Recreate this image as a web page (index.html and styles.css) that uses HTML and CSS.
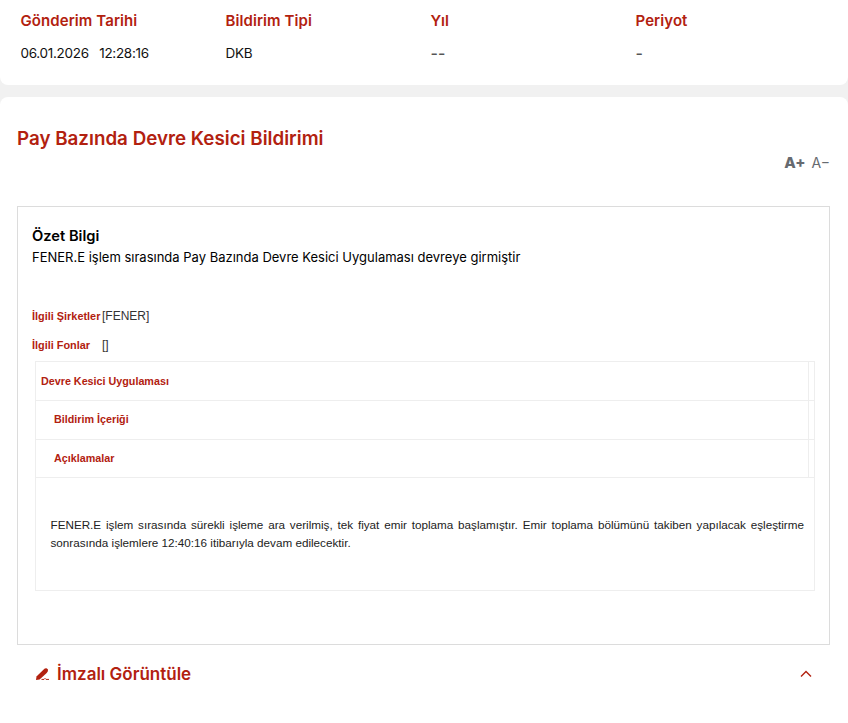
FILE: index.html
```html
<!DOCTYPE html>
<html lang="tr">
<head>
<meta charset="utf-8">
<title>Pay Bazında Devre Kesici Bildirimi</title>
<link rel="stylesheet" href="styles.css">
</head>
<body>
<section class="meta-card">
  <div class="meta-col"><div class="meta-label">Gönderim Tarihi</div><div class="meta-value">06.01.2026 &nbsp; 12:28:16</div></div>
  <div class="meta-col"><div class="meta-label">Bildirim Tipi</div><div class="meta-value">DKB</div></div>
  <div class="meta-col"><div class="meta-label">Yıl</div><div class="meta-value muted">--</div></div>
  <div class="meta-col"><div class="meta-label">Periyot</div><div class="meta-value muted">-</div></div>
</section>
<main class="main-card">
  <h1 class="title">Pay Bazında Devre Kesici Bildirimi</h1>
  <div class="font-tools"><span class="font-up">A+</span><span class="font-down">A−</span></div>
  <div class="box">
    <h2 class="summary-title">Özet Bilgi</h2>
    <p class="summary-text">FENER.E işlem sırasında Pay Bazında Devre Kesici Uygulaması devreye girmiştir</p>
    <div class="rel first"><span class="rel-label">İlgili Şirketler</span><span class="rel-value">[FENER]</span></div>
    <div class="rel"><span class="rel-label">İlgili Fonlar</span><span class="rel-value">[]</span></div>
    <table class="notice">
      <tr><td class="head">Devre Kesici Uygulaması</td><td class="side"></td></tr>
      <tr><td class="head sub">Bildirim İçeriği</td><td class="side"></td></tr>
      <tr><td class="head sub short">Açıklamalar</td><td class="side"></td></tr>
      <tr><td class="body" colspan="2"><p>FENER.E işlem sırasında sürekli işleme ara verilmiş, tek fiyat emir toplama başlamıştır. Emir toplama bölümünü takiben yapılacak eşleştirme sonrasında işlemlere 12:40:16 itibarıyla devam edilecektir.</p></td></tr>
    </table>
  </div>
  <div class="signed">
    <svg class="pen" viewBox="0 0 13 12" aria-hidden="true"><path d="M0 12 L.5 8.6 L7.4 1.7 Q9.2 0 10.9.4 L12 1.5 Q12.4 3.2 10.7 5 L3.6 11.4 Z"/><path class="pen-line" d="M5.5 11.4 H8 L9 10.4 L10 11.4 H13"/></svg>
    <span class="signed-label">İmzalı Görüntüle</span>
    <svg class="chev" viewBox="0 0 12 8" aria-hidden="true"><path d="M1 6.5 L6 1.5 L11 6.5"/></svg>
  </div>
</main>
</body>
</html>
```
FILE: styles.css
```css
* { box-sizing: border-box; }
html, body { margin: 0; padding: 0; }
body {
  width: 848px;
  height: 723px;
  overflow: hidden;
  background: #f1f1f1;
  font-family: Inter, "Noto Sans", sans-serif;
  color: #000;
}
.meta-card {
  height: 85px;
  background: #fff;
  border-radius: 0 0 8px 8px;
  padding: 11px 0 0 20.5px;
  display: grid;
  grid-template-columns: repeat(4, 205px);
  margin-bottom: 12px;
}
.meta-label {
  color: #b2210f;
  font-size: 15px;
  font-weight: 600;
  line-height: 20px;
  letter-spacing: .08px;
}
.meta-value {
  margin-top: 12px;
  font-size: 13.5px;
  line-height: 20px;
  letter-spacing: -.3px;
  color: #111;
}
.meta-value.muted { color: #555; font-size: 16px; font-weight: 500; letter-spacing: 0; }
.main-card {
  height: 626px;
  background: #fff;
  border-radius: 8px 8px 0 0;
  padding: 27px 18px 0 17px;
}
.title {
  margin: 0;
  color: #b2210f;
  font-size: 18.8px;
  font-weight: 600;
  line-height: 30px;
}
.font-tools {
  display: flex;
  justify-content: flex-end;
  align-items: baseline;
  gap: 6px;
  height: 20px;
  margin-top: -1px;
  color: #666a70;
  line-height: 20px;
}
.font-up { font-size: 15px; font-weight: 800; }
.font-down { font-size: 14px; }
.box {
  margin-top: 33px;
  height: 439px;
  border: 1px solid #dcdcdc;
  padding: 19px 14px 0;
}
.summary-title {
  margin: 0;
  font-size: 14.7px;
  font-weight: 600;
  line-height: 20px;
}
.summary-text {
  margin: 1px 0 0;
  font-size: 13px;
  line-height: 20px;
}
.rel {
  display: flex;
  align-items: center;
  height: 20px;
  margin-top: 9px;
  font-family: "Liberation Sans", Arial, sans-serif;
}
.rel.first { margin-top: 39px; }
.rel-label {
  width: 70px;
  color: #b2210f;
  font-size: 10.9px;
  font-weight: 700;
  white-space: nowrap;
}
.rel-value { font-size: 12px; color: #333; }
.notice {
  width: 780px;
  margin: 6px 0 0 3px;
  border-collapse: collapse;
  table-layout: fixed;
  font-family: "Liberation Sans", Arial, sans-serif;
}
.notice td { border: 1px solid #eee; padding: 0; }
.head {
  height: 39px;
  padding-left: 5px !important;
  color: #b2210f;
  font-size: 10.75px;
  font-weight: 700;
}
.head.sub { padding-left: 18px !important; padding-bottom: 2px !important; }
.head.short { height: 38px; }
.side { width: 6px; }
.body {
  height: 113px;
  padding: 0 10px 0 14.5px !important;
  color: #222;
  font-size: 11.7px;
  line-height: 18px;
  text-align: justify;
}
.body p { margin: 0; }
.signed {
  display: flex;
  align-items: center;
  height: 30px;
  margin-top: 14px;
  padding-left: 19px;
  padding-right: 18px;
  color: #b2210f;
}
.pen { width: 13px; height: 12px; fill: currentColor; }
.pen-line { fill: none; stroke: currentColor; stroke-width: 1; }
.signed-label {
  margin-left: 8px;
  font-size: 17px;
  font-weight: 600;
  line-height: 20px;
}
.chev {
  margin-left: auto;
  width: 12px;
  height: 8px;
  fill: none;
  stroke: currentColor;
  stroke-width: 1.4;
}
```
